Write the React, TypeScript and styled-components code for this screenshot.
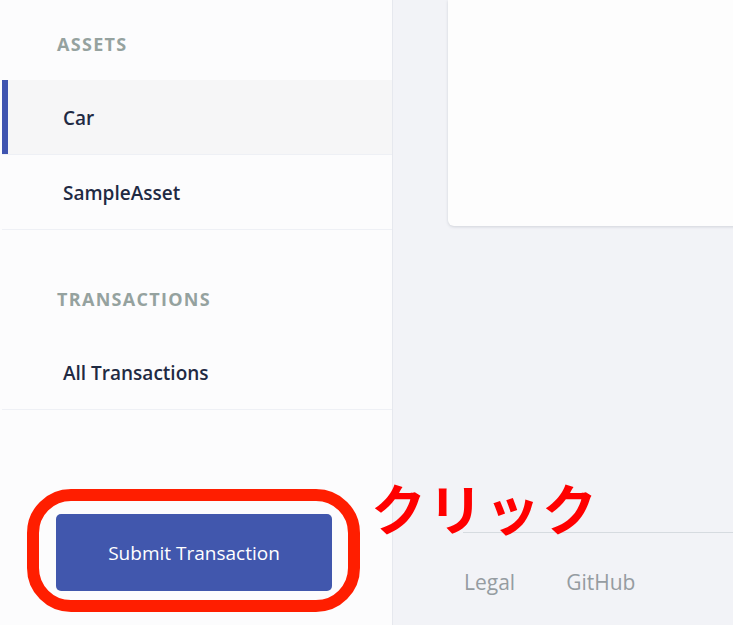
import React from "react";
import styled, { createGlobalStyle } from "styled-components";

const Global = createGlobalStyle`
  html, body { margin: 0; padding: 0; height: 100%; }
  body { font-family: "Open Sans", "Noto Sans", sans-serif; background: #f2f3f7; }
  #root { height: 100%; }
`;

const Page = styled.div`
  display: flex;
  width: 733px;
  height: 625px;
  overflow: hidden;
  background: #f2f3f7;
`;

const Sidebar = styled.aside`
  width: 392px;
  flex: none;
  display: flex;
  flex-direction: column;
  background: #fcfcfd;
  border-right: 1px solid #e6e8ee;
  position: relative;
`;

const SectionTitle = styled.div<{ $top: number }>`
  margin: ${(p) => p.$top}px 0 22px 57px;
  height: 28px;
  line-height: 28px;
  font-size: 18px;
  font-weight: 700;
  letter-spacing: 1.3px;
  color: #95a29f;
  text-transform: uppercase;
`;

const NavItem = styled.div<{ $active?: boolean }>`
  height: 75px;
  box-sizing: border-box;
  display: flex;
  align-items: center;
  padding-left: 61px;
  padding-top: 1px;
  margin-left: 2px;
  font-size: 19px;
  font-weight: 600;
  color: #1f2a43;
  border-bottom: 1px solid #eef0f5;
  background: ${(p) => (p.$active ? "#f6f6f7" : "transparent")};
  box-shadow: ${(p) => (p.$active ? "inset 6px 0 0 #3f54b0" : "none")};
`;

const ButtonArea = styled.div`
  margin-top: auto;
  margin-bottom: 34px;
  padding-left: 56px;
  position: relative;
`;

const SubmitButton = styled.button`
  width: 276px;
  height: 77px;
  border: none;
  border-radius: 5px;
  background: #4157ad;
  color: #ffffff;
  font-family: "Open Sans", "Noto Sans", sans-serif;
  font-size: 19px;
  font-weight: 400;
  cursor: pointer;
`;

const Ring = styled.div`
  position: absolute;
  left: 27px;
  top: -25px;
  width: 333px;
  height: 123px;
  box-sizing: border-box;
  border: 12px solid #ff1e00;
  border-radius: 44px;
  pointer-events: none;
`;

const ClickLabel = styled.div`
  position: absolute;
  left: 371px;
  top: 472px;
  font-family: "Noto Sans CJK JP", sans-serif;
  font-weight: 700;
  font-size: 55px;
  line-height: 68px;
  letter-spacing: 2px;
  color: #ff0000;
  z-index: 2;
  white-space: nowrap;
`;

const Main = styled.main`
  flex: 1;
  display: flex;
  flex-direction: column;
  overflow: hidden;
`;

const Card = styled.div`
  margin-left: 55px;
  margin-right: -20px;
  height: 226px;
  background: #fdfdfd;
  border-radius: 0 0 6px 6px;
  box-shadow: 0 1px 3px rgba(60, 70, 90, 0.18);
`;

const Footer = styled.footer`
  margin-top: auto;
  margin-left: 70px;
  height: 93px;
  border-top: 1px solid #d6dbe0;
  display: flex;
  align-items: center;
  gap: 51px;
  padding-left: 1px;
  padding-top: 6px;
  box-sizing: border-box;
`;

const FooterLink = styled.a`
  font-size: 21px;
  color: #959ca1;
  text-decoration: none;
`;

export default function App() {
  return (
    <>
      <Global />
      <Page>
        <Sidebar>
          <SectionTitle $top={30}>Assets</SectionTitle>
          <NavItem $active>Car</NavItem>
          <NavItem>SampleAsset</NavItem>
          <SectionTitle $top={55}>Transactions</SectionTitle>
          <NavItem>All Transactions</NavItem>
          <ButtonArea>
            <SubmitButton>Submit Transaction</SubmitButton>
            <Ring />
          </ButtonArea>
        </Sidebar>
        <Main>
          <Card />
          <Footer>
            <FooterLink>Legal</FooterLink>
            <FooterLink>GitHub</FooterLink>
          </Footer>
        </Main>
        <ClickLabel>クリック</ClickLabel>
      </Page>
    </>
  );
}
